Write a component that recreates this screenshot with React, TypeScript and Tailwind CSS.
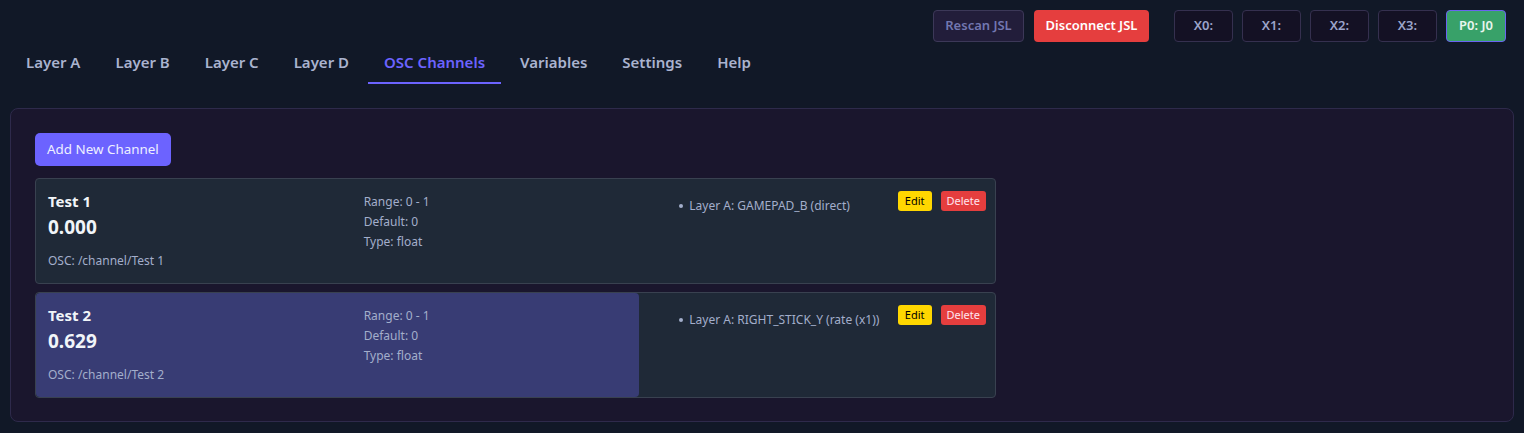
import React from "react";

const tabs = ["Layer A", "Layer B", "Layer C", "Layer D", "OSC Channels", "Variables", "Settings", "Help"];

type Ch = { name: string; value: number; mapping: string };
const channels: Ch[] = [
  { name: "Test 1", value: 0, mapping: "Layer A: GAMEPAD_B (direct)" },
  { name: "Test 2", value: 0.629, mapping: "Layer A: RIGHT_STICK_Y (rate (x1))" },
];

function Card({ ch }: { ch: Ch }) {
  return (
    <div className="relative w-[961px] h-[106px] rounded-[4px] border border-[#394150] bg-[#1f2937] overflow-hidden">
      <div
        className="absolute left-0 top-0 bottom-0 rounded-[4px] bg-[#383c74]"
        style={{ width: `${ch.value * 100}%` }}
      />
      <div className="relative grid grid-cols-3 gap-3 px-3 pt-[10px]">
        <div className="flex flex-col">
          <div className="text-[15px] font-bold text-[#f1f5f9] leading-[24px]">{ch.name}</div>
          <div className="text-[19px] font-bold text-[#f1f5f9] leading-[26px] mt-[1px]">{ch.value.toFixed(3)}</div>
          <div className="text-[12px] text-[#a3aecb] leading-[16px] mt-[13px]">OSC: /channel/{ch.name}</div>
        </div>
        <div className="flex flex-col text-[12px] leading-[20px] text-[#a3aecb] pt-[3px]">
          <div>Range: 0 - 1</div>
          <div>Default: 0</div>
          <div>Type: float</div>
        </div>
        <div className="flex justify-between items-start">
          <ul className="text-[12px] text-[#a3aecb] leading-[20px] pt-[7px]">
            <li className="flex items-center">
              <span className="inline-block w-[4px] h-[4px] rounded-full bg-[#a3aecb] mr-[6px]" />
              {ch.mapping}
            </li>
          </ul>
          <div className="flex gap-[9px] pt-[2px] mr-[-3px]">
            <button className="h-[20px] px-[7px] rounded-[3px] bg-[#ffd700] text-black text-[11px] leading-[20px]">Edit</button>
            <button className="h-[20px] px-[6px] rounded-[3px] bg-[#e53e3e] text-[#ffe4ef] text-[11px] leading-[20px]">Delete</button>
          </div>
        </div>
      </div>
    </div>
  );
}

export default function App() {
  return (
    <div
      className="w-[1524px] h-[433px] bg-[#111827] overflow-hidden"
      style={{ fontFamily: '"Noto Sans", "Open Sans", sans-serif' }}
    >
      <div className="flex justify-end items-center pt-[10px] pr-[18px] h-[42px]">
        <button className="h-[32px] w-[91px] rounded-[4px] border border-[#3c3858] bg-[#221d3a] text-[13px] font-semibold text-[#7277b0]">
          Rescan JSL
        </button>
        <button className="ml-[10px] h-[32px] w-[115px] rounded-[4px] bg-[#e53e3e] text-[13px] font-semibold text-white">
          Disconnect JSL
        </button>
        <div className="flex gap-[9px] ml-[25px]">
          {["X0:", "X1:", "X2:", "X3:"].map((x) => (
            <button
              key={x}
              className="h-[32px] w-[59px] rounded-[4px] border border-[#35304f] bg-[#141124] text-[13px] font-semibold text-[#9ba3c9]"
            >
              {x}
            </button>
          ))}
          <button className="h-[32px] w-[60px] rounded-[4px] border border-[#6a63f0] bg-[#38a169] text-[13px] font-semibold text-[#e8f5ee]">
            P0: J0
          </button>
        </div>
      </div>
      <div className="flex gap-[3px] pl-[10px] h-[42px]">
        {tabs.map((t) => {
          const active = t === "OSC Channels";
          return (
            <div
              key={t}
              className={`px-4 h-[42px] flex items-center text-[15px] font-semibold border-b-2 ${
                active ? "border-[#6c63ff] text-[#6c63ff]" : "border-transparent text-[#aab3cf]"
              }`}
            >
              {t}
            </div>
          );
        })}
      </div>
      <div className="mt-[24px] mx-[10px] w-[1504px] h-[314px] rounded-[8px] border border-[#2e2a4b] bg-[#1a162d] p-6">
        <button className="h-[33px] px-[12px] rounded-[5px] bg-[#6c63ff] text-[13.4px] text-[#eef0ff]">
          Add New Channel
        </button>
        <div className="flex flex-col gap-2 mt-3">
          {channels.map((c) => (
            <Card key={c.name} ch={c} />
          ))}
        </div>
      </div>
    </div>
  );
}
